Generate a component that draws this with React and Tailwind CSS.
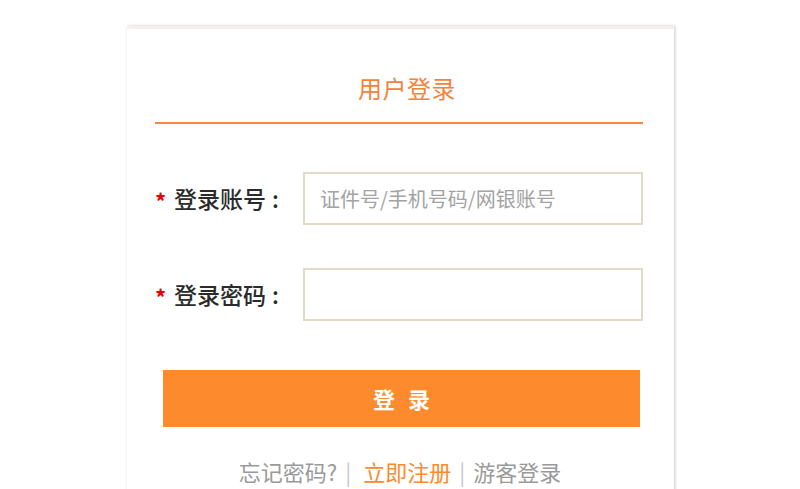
import { useState } from 'react'

const FONT = '"Noto Sans CJK SC", "Noto Sans", sans-serif'

function Field({ label, placeholder, type = 'text', value, onChange }) {
  return (
    <div className="flex items-center h-[53px]">
      <div className="w-[148px] flex items-center shrink-0">
        <span className="text-[#e60000] text-[22px] font-bold w-[19px] text-right pr-[8px] leading-none mt-[2px]">*</span>
        <span className="text-[23px] text-[#2b2b2b] font-medium">{label}</span>
        <span className="text-[23px] text-[#2b2b2b] font-medium ml-[6px]">:</span>
      </div>
      <input
        type={type}
        value={value}
        onChange={(e) => onChange(e.target.value)}
        placeholder={placeholder}
        className="w-[341px] h-[53px] border-2 border-[#dfdbc7] px-[15px] text-[20px] text-[#333] placeholder:text-[#a3a3a3] outline-none"
        style={{ fontFamily: FONT }}
      />
    </div>
  )
}

export default function App() {
  const [account, setAccount] = useState('')
  const [password, setPassword] = useState('')

  return (
    <div className="w-[800px] h-[489px] overflow-hidden bg-white" style={{ fontFamily: FONT }}>
      <div className="pt-[26px] pl-[127px]">
        <div className="w-[547px] h-[500px] bg-white border-t-[3px] border-[#f4f2ea] shadow-[1px_0_3px_rgba(0,0,0,0.22)] pl-[28px] pr-[31px]">
          {/* title */}
          <div className="pt-[41px] pb-[16px] border-b-2 border-[#f68a44] text-center pl-[16px]">
            <span className="text-[24px] leading-[36px] text-[#f5823c] tracking-[0.5px]">用户登录</span>
          </div>

          <div className="mt-[48px] flex flex-col gap-[43px]">
            <Field
              label="登录账号"
              placeholder="证件号/手机号码/网银账号"
              value={account}
              onChange={setAccount}
            />
            <Field label="登录密码" type="password" value={password} onChange={setPassword} />
          </div>

          <button className="mt-[49px] ml-[8px] w-[477px] h-[57px] bg-[#fd8b2d] text-white text-[22px] font-bold tracking-[4px] pl-[4px]">
            登 录
          </button>

          <div className="mt-[28px] flex items-center justify-center text-[22px] leading-[32px] text-[#9a9a9a] pl-[2px]">
            <span>忘记密码?</span>
            <span className="mx-[8px] text-[#c8c8c8]">|</span>
            <span className="text-[#fb8a2c] ml-[4px]">立即注册</span>
            <span className="mx-[8px] text-[#c8c8c8]">|</span>
            <span>游客登录</span>
          </div>
        </div>
      </div>
    </div>
  )
}
